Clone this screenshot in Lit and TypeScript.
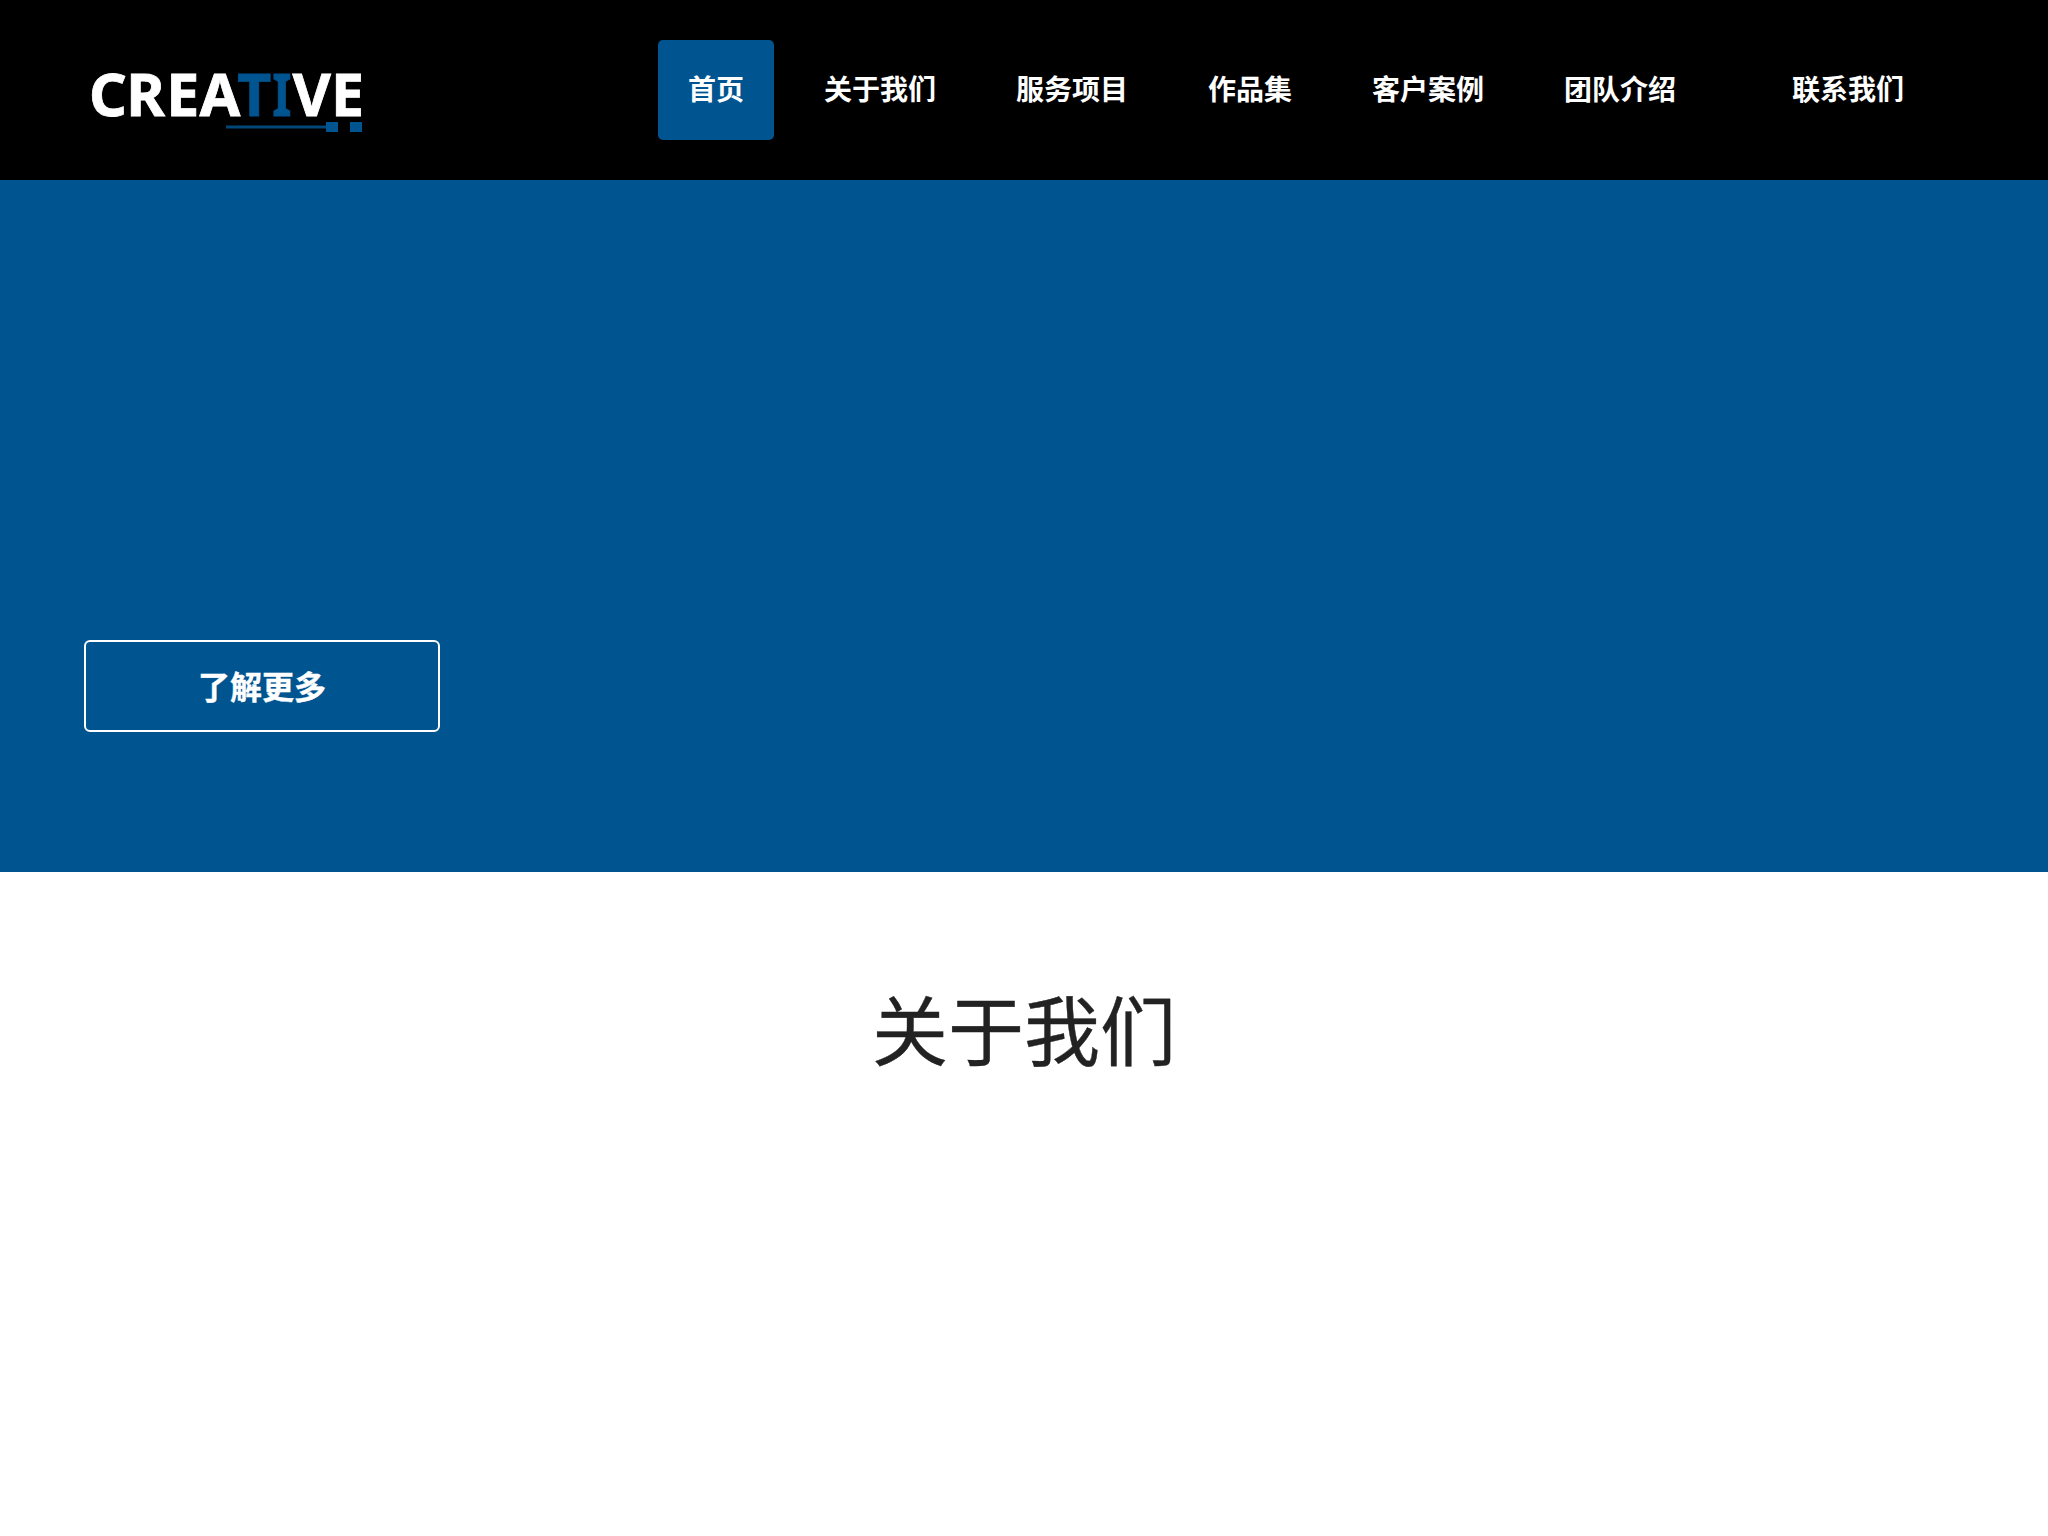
import { LitElement, html, css } from "lit";
import { customElement } from "lit/decorators.js";

const links = ["首页", "关于我们", "服务项目", "作品集", "客户案例", "团队介绍", "联系我们"];

@customElement("app-root")
export class AppRoot extends LitElement {
  static styles = css`
    :host { display: block; min-height: 1536px; background: #fff; font-family: "Noto Sans CJK SC", sans-serif; overflow: hidden; }
    * { box-sizing: border-box; }
    .bar { height: 180px; background: #000; display: flex; justify-content: space-between; padding: 40px 114px 0 84px; }
    .logo { display: block; width: 290px; height: 100px; filter: blur(0.6px); }
    .word { font-family: "Noto Sans", sans-serif; font-weight: 700; font-size: 59px; fill: #fff; stroke: #fff; stroke-width: 0.8px; }
    .accent { fill: #005490; stroke: #005490; }
    .mark { fill: #005490; }
    .rule { fill: #004679; }
    .nav { display: flex; gap: 20px; }
    .link { height: 100px; padding: 0 30px; line-height: 96px; border-radius: 5px; color: #fff; font-size: 28px; font-weight: 700; text-decoration: none; white-space: nowrap; }
    .link.active { background: #005490; }
    .link:last-child { margin-left: 36px; }
    .hero { height: 692px; background: #005490; padding: 460px 84px 0; }
    .more { display: block; width: 356px; height: 92px; border: 2px solid #fff; border-radius: 6px; color: #fff; font-size: 32px; font-weight: 700; line-height: 87px; text-align: center; text-decoration: none; -webkit-text-stroke: 0.4px #fff; }
    .title { margin: 0; padding-top: 99px; text-align: center; color: #222; font-size: 76px; font-weight: 400; line-height: 112px; -webkit-text-stroke: 0.4px #222; }
  `;
  render() {
    return html`
      <header class="bar">
        <svg class="logo" viewBox="84 40 290 100">
          <text class="word" y="116" x="88.9 126.3 166.3 199.5">CREA</text>
          <text class="word accent" y="116" x="237.2">T</text>
          <text class="word accent" transform="translate(272.2 116) scale(0.84 1)">I</text>
          <text class="word" y="116" x="292.4 331">VE</text>
          <path class="rule" d="M226 125.5h100v3H226z"/>
          <path class="mark" d="M326 122h12v10h-12zM350 122h12v10h-12z"/>
        </svg>
        <nav class="nav">${links.map((t, i) => html`<a class="link ${i === 0 ? "active" : ""}">${t}</a>`)}</nav>
      </header>
      <section class="hero"><a class="more">了解更多</a></section>
      <h2 class="title">关于我们</h2>
    `;
  }
}
